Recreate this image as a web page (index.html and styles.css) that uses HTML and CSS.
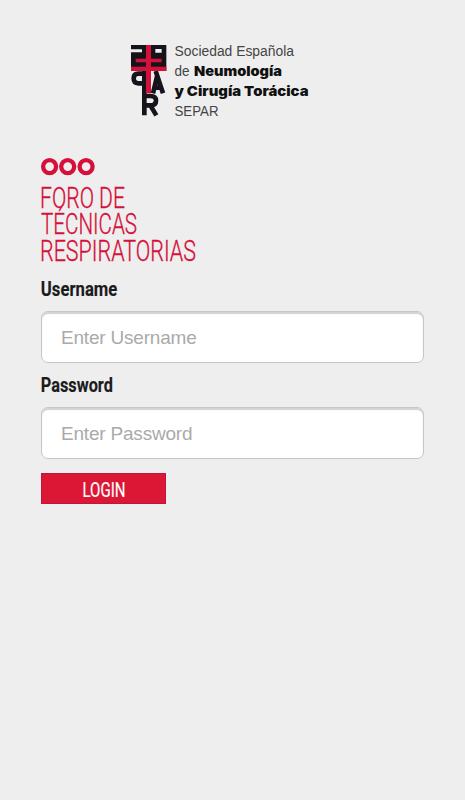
FILE: index.html
```html
<!DOCTYPE html>
<html lang="es">
<head>
<meta charset="utf-8">
<meta name="viewport" content="width=device-width, initial-scale=1">
<title>Foro de Técnicas Respiratorias</title>
<link rel="stylesheet" href="styles.css">
</head>
<body>
<header class="brand">
<svg class="mark" viewBox="0 0 108 216" aria-hidden="true">
<path fill="#17131a" d="M0 0H106V78H0z"/>
<path fill="#eee" d="M0 13H33V22H0zM73 12H92V23H73z"/>
<path fill="none" stroke="#17131a" stroke-width="14" d="M40 78V211M36 86H22Q8 86 8 100Q8 115 22 115H36M74 78L96 145M66 128H88M66 145L78 95M40 153H58Q75 153 75 167Q75 181 58 181H40M58 181L76 211"/>
<path fill="#d5103a" d="M45 0H60V145H45zM14 41H92V52H14zM0 65H106V78H0z"/>
</svg>
<svg class="name" viewBox="0 0 140 80">
<text x="-.5" y="18" textLength="119.5" lengthAdjust="spacingAndGlyphs">Sociedad Española</text>
<text x="-.5" y="38" textLength="15" lengthAdjust="spacingAndGlyphs">de</text>
<text class="heavy" x="19" y="38" textLength="88" lengthAdjust="spacingAndGlyphs">Neumología</text>
<text class="heavy" x="-.5" y="58" textLength="134" lengthAdjust="spacingAndGlyphs">y Cirugía Torácica</text>
<text x="-.5" y="78" textLength="44" lengthAdjust="spacingAndGlyphs">SEPAR</text>
</svg>
</header>
<main class="content">
<svg class="rings" viewBox="0 0 54 18" aria-hidden="true"><circle cx="8.6" cy="8.6" r="6.5"/><circle cx="26.7" cy="8.6" r="6.5"/><circle cx="45.1" cy="8.6" r="6.5"/></svg>
<h1 class="title"><svg viewBox="0 0 160 88">
<text x="-1" y="32.2" textLength="85" lengthAdjust="spacingAndGlyphs">FORO DE</text>
<text x="0" y="58.4" textLength="96" lengthAdjust="spacingAndGlyphs">TÉCNICAS</text>
<text x="-1" y="84.6" textLength="156" lengthAdjust="spacingAndGlyphs">RESPIRATORIAS</text>
</svg></h1>
<form class="login">
<label class="label" for="user"><svg viewBox="0 0 90 26"><text x="-.2" y="19.6" textLength="76.5" lengthAdjust="spacingAndGlyphs">Username</text></svg></label>
<input class="field" id="user" type="text" placeholder="Enter Username">
<label class="label" for="pass"><svg viewBox="0 0 90 26"><text x="-.2" y="20.4" textLength="72" lengthAdjust="spacingAndGlyphs">Password</text></svg></label>
<input class="field" id="pass" type="password" placeholder="Enter Password">
<button class="submit" type="button"><svg viewBox="0 0 125 31"><text x="41.5" y="23.7" textLength="43" lengthAdjust="spacingAndGlyphs">LOGIN</text></svg></button>
</form>
</main>
</body>
</html>
```
FILE: styles.css
```css
* { box-sizing: border-box; }
body { margin: 0; min-height: 800px; background: #eee; font-family: "Liberation Sans", sans-serif; }
svg { display: block; overflow: visible; }
.brand { display: flex; padding: 38px 0 0 131px; height: 120px; }
.mark { width: 36px; height: 72px; margin-top: 6.5px; }
.name { width: 140px; height: 80px; margin-left: 7.5px; font-size: 14px; fill: #444; }
.heavy { font-family: Inter, "Liberation Sans", sans-serif; font-weight: 900; font-size: 13.5px; fill: #111; }
.content { padding: 38px 41px 0; }
.rings { width: 54px; height: 18px; fill: none; stroke: #d5103a; stroke-width: 4.3; }
.title { margin: 0; height: 100px; font: 300 30.2px Roboto, sans-serif; fill: #d5103a; stroke: #d5103a; stroke-width: .35; }
.title svg { width: 160px; height: 88px; }
.label { display: block; height: 35px; font: 700 20.5px Roboto, sans-serif; fill: #1b1b1b; stroke: #1b1b1b; stroke-width: .15; }
.label svg { width: 90px; height: 26px; }
.field { display: block; width: 383px; height: 52px; margin: 0 0 9px; padding: 2px 19px 0; border: 1px solid #c6c6c6; border-radius: 7px; background: #fff; box-shadow: inset 0 2px 1px #d2d2d2; font: 19px "Liberation Sans", sans-serif; letter-spacing: -.2px; outline: 0; }
.field::placeholder { color: #aaa; opacity: 1; }
.submit { display: block; width: 125px; height: 31px; margin-top: 14px; padding: 0; border: 1px solid #c01540; background: #dc1735; font: 400 21px Roboto, sans-serif; fill: #fff; stroke: #fff; stroke-width: .2; }
.submit svg { width: 125px; height: 31px; margin: -1px; }
```
